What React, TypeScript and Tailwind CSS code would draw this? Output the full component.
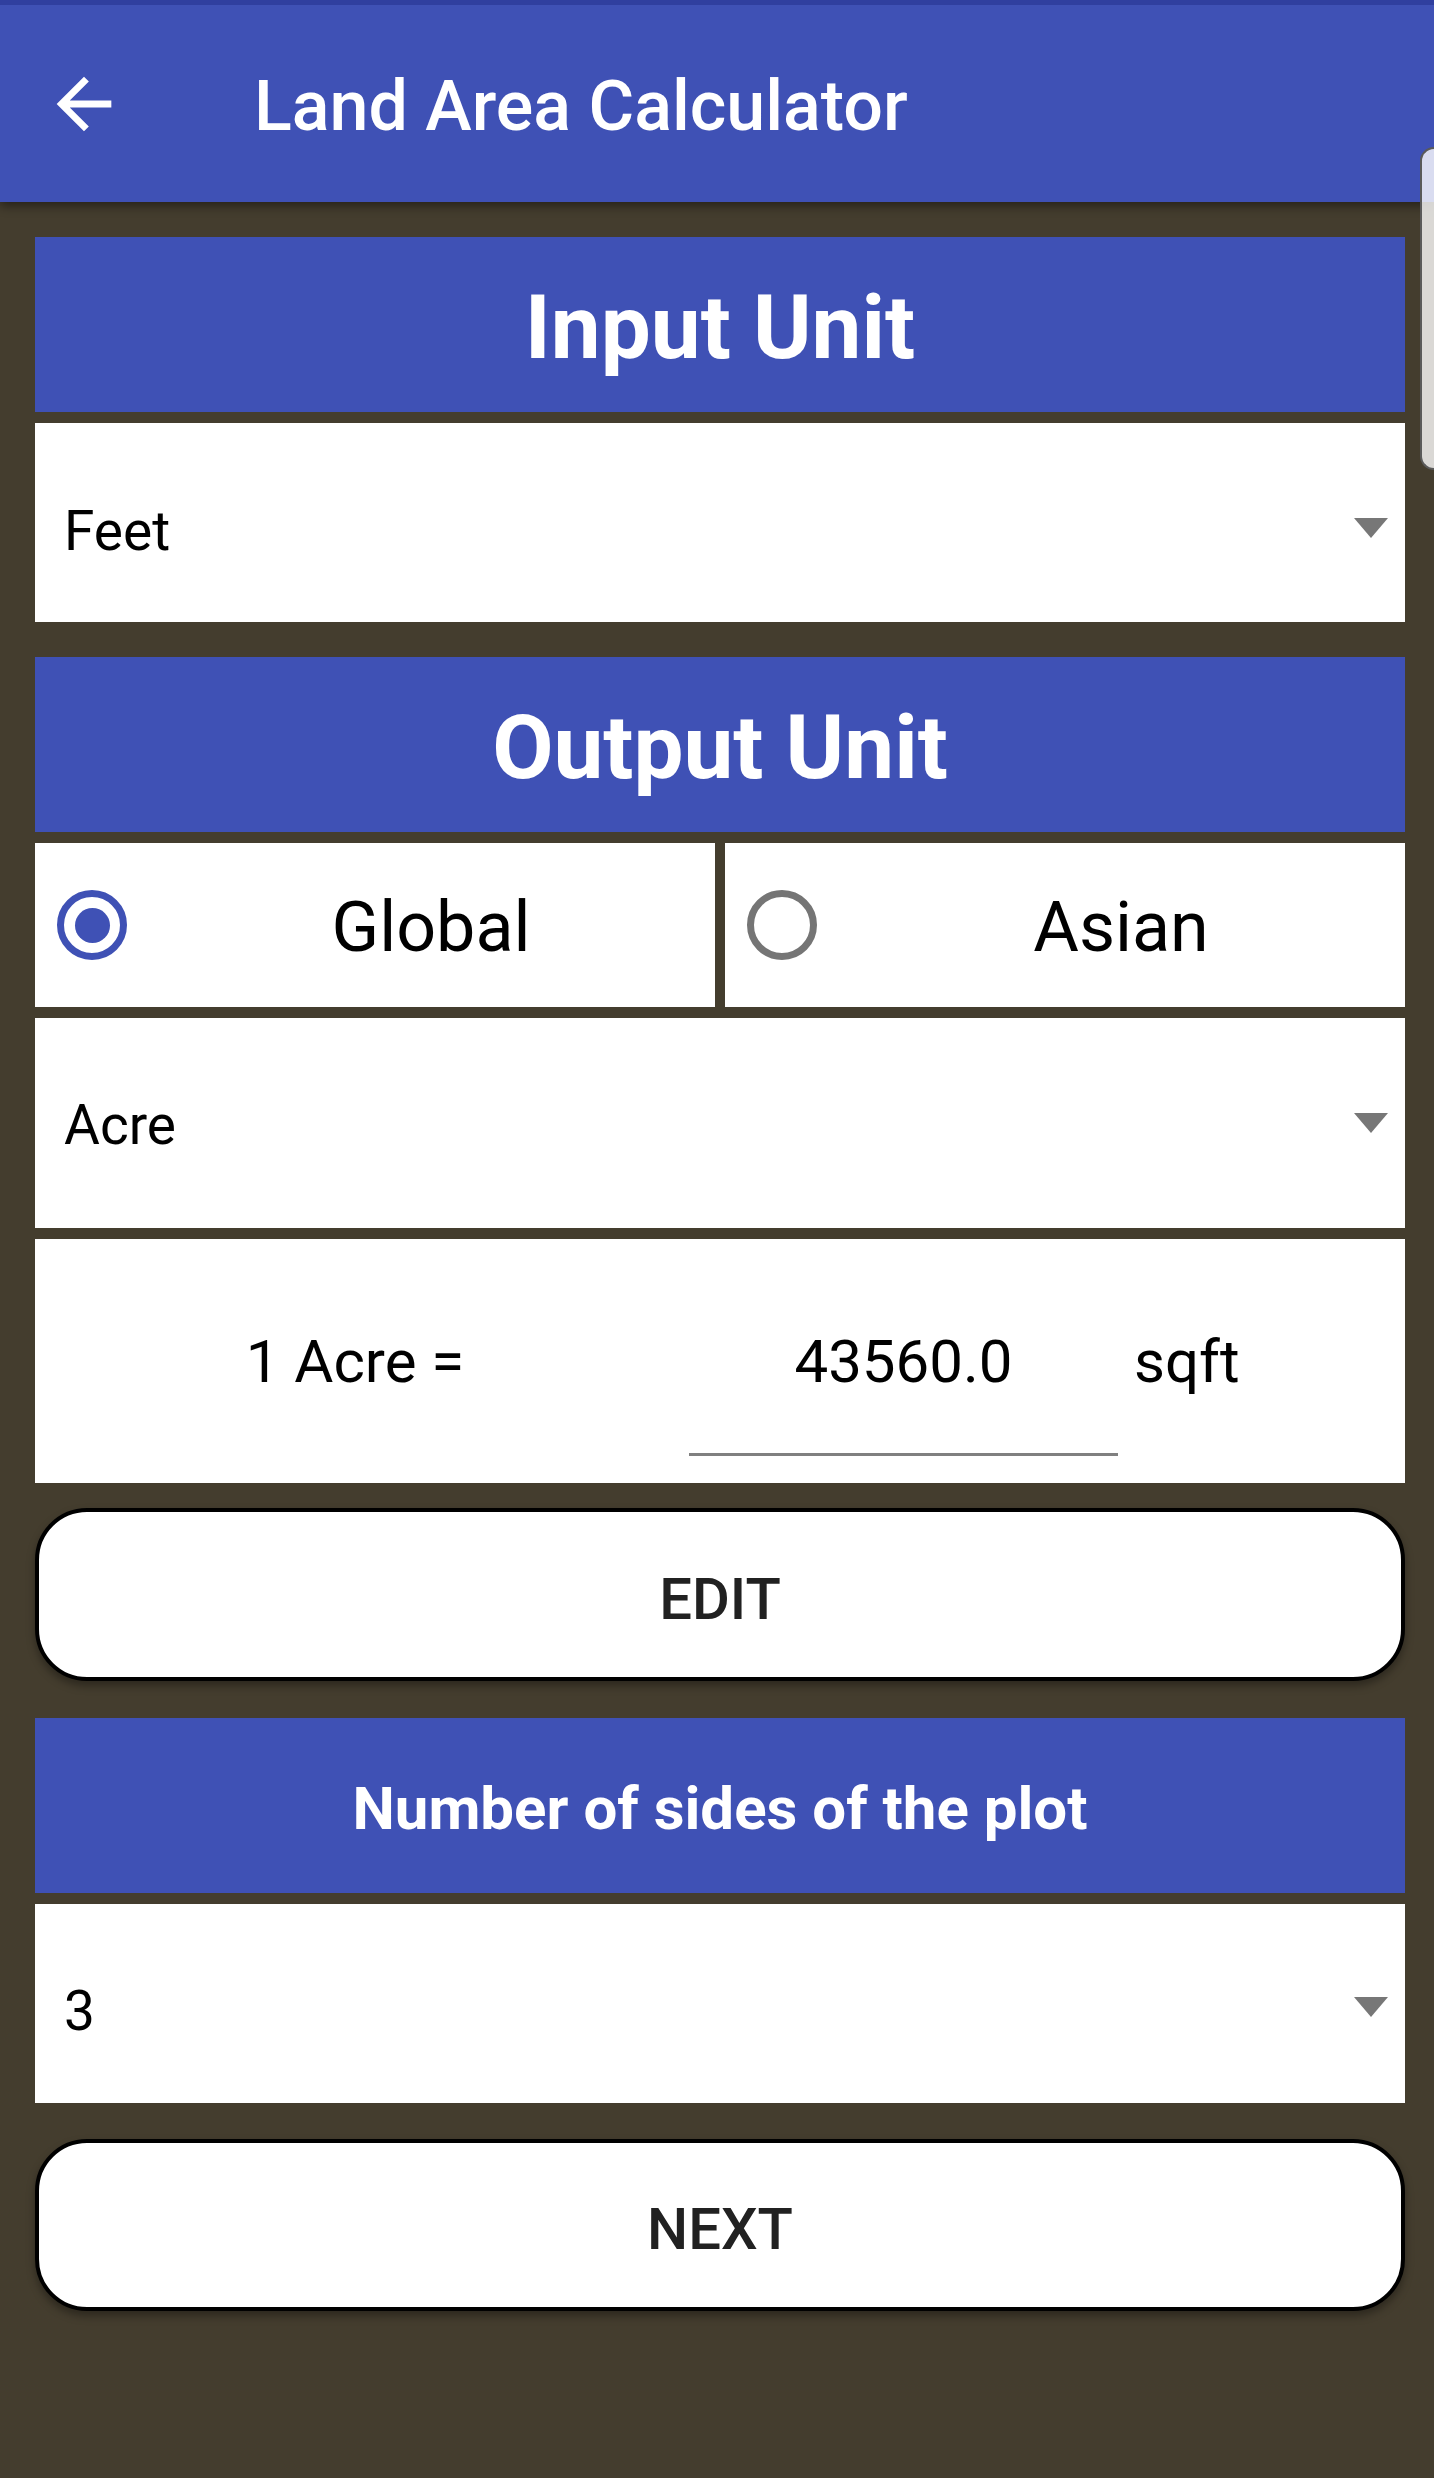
import React from "react";

function Triangle() {
  return (
    <svg width="34" height="20" viewBox="0 0 34 20" className="shrink-0">
      <polygon points="0,0 34,0 17,20" fill="#777777" />
    </svg>
  );
}

function Radio({ checked }: { checked: boolean }) {
  return checked ? (
    <div className="w-[70px] h-[70px] rounded-full border-[7px] border-[#3f51b5] flex items-center justify-center shrink-0">
      <div className="w-[35px] h-[35px] rounded-full bg-[#3f51b5]" />
    </div>
  ) : (
    <div className="w-[70px] h-[70px] rounded-full border-[7px] border-[#757575] shrink-0" />
  );
}

function BlueTitle({ text, size }: { text: string; size: string }) {
  return (
    <div className={`h-[175px] bg-[#3f51b5] flex items-center justify-center text-white font-bold pt-[6px] ${size}`}>
      {text}
    </div>
  );
}

export default function App() {
  return (
    <div className="relative w-[1434px] h-[2478px] bg-[#443d2e] overflow-hidden font-['Roboto',sans-serif]">
      {/* Header */}
      <div className="relative z-10 h-[202px] bg-[#3f51b5] border-t-[5px] border-[#303f9f] shadow-[0_4px_10px_rgba(0,0,0,0.45)] flex items-center">
        <svg width="82" height="82" viewBox="0 0 24 24" className="ml-[43px] shrink-0">
          <path d="M20 11H7.83l5.59-5.59L12 4l-8 8 8 8 1.41-1.41L7.83 13H20v-2z" fill="#ffffff" />
        </svg>
        <div className="ml-[129px] mt-[4px] text-white text-[70px] font-medium leading-none">Land Area Calculator</div>
      </div>

      <div className="ml-[35px] w-[1370px] pt-[35px] flex flex-col">
        <BlueTitle text="Input Unit" size="text-[89px]" />
        <div className="mt-[11px] h-[199px] bg-white flex items-center justify-between pl-[29px] pr-[17px]">
          <span className="text-[55px] text-black pt-[18px]">Feet</span>
          <div className="pt-[10px]"><Triangle /></div>
        </div>

        <div className="mt-[35px]">
          <BlueTitle text="Output Unit" size="text-[89px]" />
        </div>

        <div className="mt-[11px] h-[164px] flex gap-[10px]">
          <div className="w-[680px] h-full bg-white flex items-center pl-[22px]">
            <Radio checked={true} />
            <div className="flex-1 pl-[20px] pt-[5px] text-center text-[70px] text-black">Global</div>
          </div>
          <div className="w-[680px] h-full bg-white flex items-center pl-[22px]">
            <Radio checked={false} />
            <div className="flex-1 pl-[20px] pt-[5px] text-center text-[70px] text-black">Asian</div>
          </div>
        </div>

        <div className="mt-[11px] h-[210px] bg-white flex items-center justify-between pl-[29px] pr-[17px]">
          <span className="text-[55px] text-black pt-[5px]">Acre</span>
          <div><Triangle /></div>
        </div>

        <div className="mt-[11px] h-[244px] bg-white flex items-start pt-[78px] text-[60px] text-black">
          <div className="w-[640px] text-center">1 Acre =</div>
          <div className="ml-[14px] w-[429px] text-center pb-[46px] border-b-[3px] border-[#808080]">43560.0</div>
          <div className="ml-[16px]">sqft</div>
        </div>

        <div className="mt-[25px] h-[173px] bg-white rounded-[52px] border-[4px] border-black shadow-[0_5px_8px_rgba(0,0,0,0.35)] flex items-center justify-center text-[58px] font-medium text-[#212121] pt-[9px]">
          EDIT
        </div>

        <div className="mt-[37px]">
          <BlueTitle text="Number of sides of the plot" size="text-[60px]" />
        </div>

        <div className="mt-[11px] h-[199px] bg-white flex items-center justify-between pl-[29px] pr-[17px]">
          <span className="text-[55px] text-black pt-[16px]">3</span>
          <div className="pt-[7px]"><Triangle /></div>
        </div>

        <div className="mt-[36px] h-[172px] bg-white rounded-[52px] border-[4px] border-black shadow-[0_5px_8px_rgba(0,0,0,0.35)] flex items-center justify-center text-[58px] font-medium text-[#212121] pt-[8px]">
          NEXT
        </div>
      </div>

      {/* Edge panel handle */}
      <div className="absolute z-20 right-0 top-[147px] w-[14px] h-[323px] bg-white/80 rounded-l-[20px] border-l-[2px] border-y-[2px] border-[#5a5a5a]" />
    </div>
  );
}
